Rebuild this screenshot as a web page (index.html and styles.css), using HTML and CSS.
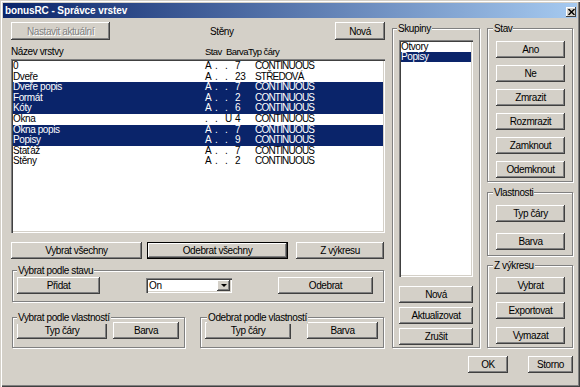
FILE: index.html
```html
<!DOCTYPE html>
<html lang="cs">
<head>
  <meta charset="UTF-8">
  <title>bonusRC - Správce vrstev</title>
  <link rel="stylesheet" href="styles.css">
</head>
<body>
  <div class="window">
    <!-- TITULEK -->
    <div class="titlebar">
      <span class="title">bonusRC - Správce vrstev</span>
      <span class="close">
        <svg width="7" height="6" viewBox="0 0 7 6"><path d="M0.5 0 L6.5 6 M6.5 0 L0.5 6" stroke="#000" stroke-width="1.4"/></svg>
      </span>
    </div>

    <div class="content">
      <!-- LEVÝ SLOUPEC: VRSTVY -->
      <div class="col-left">
        <div class="top-row">
          <button class="btn btn-current" disabled>Nastavit aktuální</button>
          <span class="current-name">Stěny</span>
          <button class="btn btn-new">Nová</button>
        </div>
        <div class="list-head">
          <span>Název vrstvy</span><span class="narrow">Stav</span><span class="narrow">Barva</span><span class="narrow">Typ čáry</span>
        </div>
        <div class="listbox layers">
          <div class="row"><span>0</span><span>A</span><span>.</span><span>.</span><span>7</span><span class="lt">CONTINUOUS</span></div>
          <div class="row"><span>Dveře</span><span>A</span><span>.</span><span>.</span><span>23</span><span class="lt">STŘEDOVÁ</span></div>
          <div class="row sel"><span>Dveře popis</span><span>A</span><span>.</span><span>.</span><span>7</span><span class="lt">CONTINUOUS</span></div>
          <div class="row sel"><span>Formát</span><span>A</span><span>.</span><span>.</span><span>2</span><span class="lt">CONTINUOUS</span></div>
          <div class="row sel"><span>Kóty</span><span>A</span><span>.</span><span>.</span><span>6</span><span class="lt">CONTINUOUS</span></div>
          <div class="row"><span>Okna</span><span>.</span><span>.</span><span>U</span><span>4</span><span class="lt">CONTINUOUS</span></div>
          <div class="row sel"><span>Okna popis</span><span>A</span><span>.</span><span>.</span><span>7</span><span class="lt">CONTINUOUS</span></div>
          <div class="row sel"><span>Popisy</span><span>A</span><span>.</span><span>.</span><span>9</span><span class="lt">CONTINUOUS</span></div>
          <div class="row"><span>Staťáž</span><span>A</span><span>.</span><span>.</span><span>7</span><span class="lt">CONTINUOUS</span></div>
          <div class="row"><span>Stěny</span><span>A</span><span>.</span><span>.</span><span>2</span><span class="lt">CONTINUOUS</span></div>
        </div>
        <div class="btn-row">
          <button class="btn w-all">Vybrat všechny</button>
          <button class="btn default w-none">Odebrat všechny</button>
          <button class="btn w-draw">Z výkresu</button>
        </div>
        <div class="group g-state">
          <span class="legend">Vybrat podle stavu</span>
          <button class="btn w-add">Přidat</button>
          <div class="combo">
            <span class="combo-text">On</span>
            <span class="combo-btn"><span class="arrow"></span></span>
          </div>
          <button class="btn w-remove">Odebrat</button>
        </div>
        <div class="group-row">
          <div class="group g-prop-add">
            <span class="legend">Vybrat podle vlastností</span>
            <button class="btn w-lt1">Typ čáry</button>
            <button class="btn w-col1">Barva</button>
          </div>
          <div class="group g-prop-del">
            <span class="legend">Odebrat podle vlastností</span>
            <button class="btn w-lt2">Typ čáry</button>
            <button class="btn w-col2">Barva</button>
          </div>
        </div>
      </div>

      <!-- PROSTŘEDNÍ SLOUPEC: SKUPINY -->
      <div class="col-groups">
        <div class="group g-groups">
          <span class="legend">Skupiny</span>
          <div class="listbox groups-list">
            <div class="row">Otvory</div>
            <div class="row sel">Popisy</div>
          </div>
          <button class="btn">Nová</button>
          <button class="btn">Aktualizovat</button>
          <button class="btn">Zrušit</button>
        </div>
      </div>

      <!-- PRAVÝ SLOUPEC -->
      <div class="col-right">
        <div class="group g-stav">
          <span class="legend">Stav</span>
          <button class="btn">Ano</button>
          <button class="btn">Ne</button>
          <button class="btn">Zmrazit</button>
          <button class="btn">Rozmrazit</button>
          <button class="btn">Zamknout</button>
          <button class="btn">Odemknout</button>
        </div>
        <div class="group g-vl">
          <span class="legend">Vlastnosti</span>
          <button class="btn">Typ čáry</button>
          <button class="btn">Barva</button>
        </div>
        <div class="group g-zv">
          <span class="legend">Z výkresu</span>
          <button class="btn">Vybrat</button>
          <button class="btn">Exportovat</button>
          <button class="btn">Vymazat</button>
        </div>
      </div>
    </div>

    <div class="footer">
      <button class="btn w-ok">OK</button>
      <button class="btn w-cancel">Storno</button>
    </div>
  </div>
</body>
</html>
```

FILE: styles.css
```css
/* ZÁKLAD */
* {
  margin: 0;
  padding: 0;
  box-sizing: border-box;
}
html, body {
  width: 580px;
  height: 387px;
  overflow: hidden;
  background: #d4d0c8;
}
body {
  font-family: "Liberation Sans", Arial, sans-serif;
  font-size: 10px;
  letter-spacing: -0.4px;
  color: #000;
}
/* ----- OKNO ----- */
.window {
  width: 580px;
  height: 387px;
  padding: 3px;
  background: #d4d0c8;
  box-shadow: inset 1px 1px #d4d0c8, inset 2px 2px #fff, inset -1px -1px #404040, inset -2px -2px #808080;
  display: flex;
  flex-direction: column;
}
.titlebar {
  height: 15px;
  display: flex;
  align-items: center;
  justify-content: space-between;
  padding: 0 1px 0 2px;
  background: linear-gradient(to right, #0a246a, #a6caf0);
}
.title {
  color: #fff;
  font-weight: bold;
  letter-spacing: -0.1px;
}
.close {
  width: 10px;
  height: 10px;
  margin-top: 2px;
  background: #d4d0c8;
  box-shadow: inset -1px -1px #404040, inset 1px 1px #fff;
  display: flex;
  align-items: center;
  justify-content: center;
}
.content {
  display: flex;
  padding: 0 4px 0 8px;
}
/* ----- TLAČÍTKA ----- */
.btn {
  font: inherit;
  letter-spacing: inherit;
  color: #000;
  background: #d4d0c8;
  border: none;
  height: 17px;
  padding: 0;
  flex-shrink: 0;
  text-align: center;
  box-shadow: inset -1px -1px #404040, inset 1px 1px #fff, inset -2px -2px #808080;
}
.btn.default {
  box-shadow: inset 0 0 0 1px #000, inset -2px -2px #404040, inset 2px 2px #fff, inset -3px -3px #808080;
}
.btn:disabled {
  color: #808080;
  text-shadow: 1px 1px #fff;
}
/* ----- LEVÝ SLOUPEC ----- */
.col-left {
  width: 374px;
  display: flex;
  flex-direction: column;
}
.top-row {
  display: flex;
  align-items: center;
  margin-top: 4px;
  height: 18px;
}
.btn-current {
  width: 99px;
  height: 18px;
}
.current-name {
  margin-left: 100px;
}
.btn-new {
  margin-left: auto;
  width: 50px;
  height: 18px;
}
.list-head {
  display: grid;
  grid-template-columns: 194px 21px 22px 1fr;
  margin-top: 5px;
  height: 14px;
  line-height: 14px;
  white-space: nowrap;
}
.list-head .narrow {
  font-size: 9.5px;
  letter-spacing: -0.6px;
}
.listbox {
  background: #fff;
  padding: 2px;
  box-shadow: inset 1px 1px #808080, inset 2px 2px #404040, inset -1px -1px #fff, inset -2px -2px #d4d0c8;
}
.layers {
  height: 174px;
}
.layers .row {
  display: grid;
  grid-template-columns: 192px 10px 10px 10px 20px 1fr;
  height: 10.6px;
  line-height: 10.6px;
  white-space: nowrap;
}
.row.sel {
  background: #0a246a;
  color: #fff;
}
.lt {
  letter-spacing: -0.8px;
}
.btn-row {
  display: flex;
  margin-top: 9px;
}
.w-all { width: 131px; }
.w-none { width: 141px; margin-left: 5px; }
.w-draw { width: 88px; margin-left: 8px; }
/* ----- SKUPINOVÉ RÁMEČKY ----- */
.group {
  position: relative;
  border: 1px solid #808080;
  box-shadow: inset 1px 1px #fff, 1px 1px #fff;
}
.legend {
  position: absolute;
  top: -6px;
  left: 4px;
  padding: 0 1px;
  line-height: 12px;
  background: #d4d0c8;
  white-space: nowrap;
}
.g-state {
  margin-top: 11px;
  margin-left: 1px;
  width: 372px;
  height: 32px;
  display: flex;
  align-items: flex-start;
  padding: 6px 0 0 4px;
}
.w-add { width: 83px; }
.w-remove { width: 95px; margin-left: 46px; }
.combo {
  width: 86px;
  height: 15px;
  margin-left: 46px;
  margin-top: 1px;
  padding: 2px;
  display: flex;
  background: #fff;
  box-shadow: inset 1px 1px #808080, inset 2px 2px #404040, inset -1px -1px #fff, inset -2px -2px #d4d0c8;
}
.combo-text {
  flex: 1;
  padding-left: 1px;
  line-height: 11px;
}
.combo-btn {
  width: 13px;
  height: 11px;
  background: #d4d0c8;
  box-shadow: inset -1px -1px #404040, inset 1px 1px #fff, inset -2px -2px #808080;
  display: flex;
  align-items: center;
  justify-content: center;
}
.arrow {
  width: 0;
  height: 0;
  border-top: 3px solid #000;
  border-left: 3px solid transparent;
  border-right: 3px solid transparent;
}
.group-row {
  display: flex;
  margin-top: 15px;
}
.g-prop-add,
.g-prop-del {
  height: 31px;
  display: flex;
  align-items: flex-start;
  padding: 4px 0 0 4px;
}
.g-prop-add {
  width: 173px;
  margin-left: 1px;
}
.g-prop-del {
  width: 184px;
  margin-left: 15px;
}
.g-prop-del .legend { left: 6px; }
.w-lt1 { width: 90px; }
.w-col1 { width: 66px; margin-left: 6px; }
.w-lt2 { width: 86px; }
.w-col2 { width: 71px; margin-left: 16px; }
/* ----- SKUPINY ----- */
.col-groups {
  width: 88px;
  margin-left: 7px;
}
.g-groups {
  margin-top: 10px;
  height: 320px;
  padding: 11px 0 0 6px;
  display: flex;
  flex-direction: column;
  gap: 4px;
}
.g-groups .btn {
  width: 74px;
}
.groups-list {
  width: 74px;
  height: 237px;
  margin-bottom: 5px;
}
.groups-list .row {
  height: 10px;
  line-height: 10px;
}
/* ----- PRAVÝ SLOUPEC ----- */
.col-right {
  width: 86px;
  margin-left: 7px;
  display: flex;
  flex-direction: column;
}
.col-right .group {
  display: flex;
  flex-direction: column;
  padding-left: 8px;
}
.col-right .legend { left: 5px; }
.col-right .btn {
  width: 69px;
}
.g-stav {
  margin-top: 10px;
  height: 154px;
  padding-top: 12px;
  gap: 7px;
}
.g-vl {
  margin-top: 10px;
  height: 64px;
  padding-top: 12px;
  gap: 11px;
}
.g-zv {
  margin-top: 9px;
  height: 83px;
  padding-top: 11px;
  gap: 8px;
}
/* ----- SPODNÍ TLAČÍTKA ----- */
.footer {
  display: flex;
  justify-content: flex-end;
  gap: 20px;
  margin-top: 8px;
  padding-right: 4px;
}
.w-ok { width: 40px; }
.w-cancel { width: 45px; }
```
